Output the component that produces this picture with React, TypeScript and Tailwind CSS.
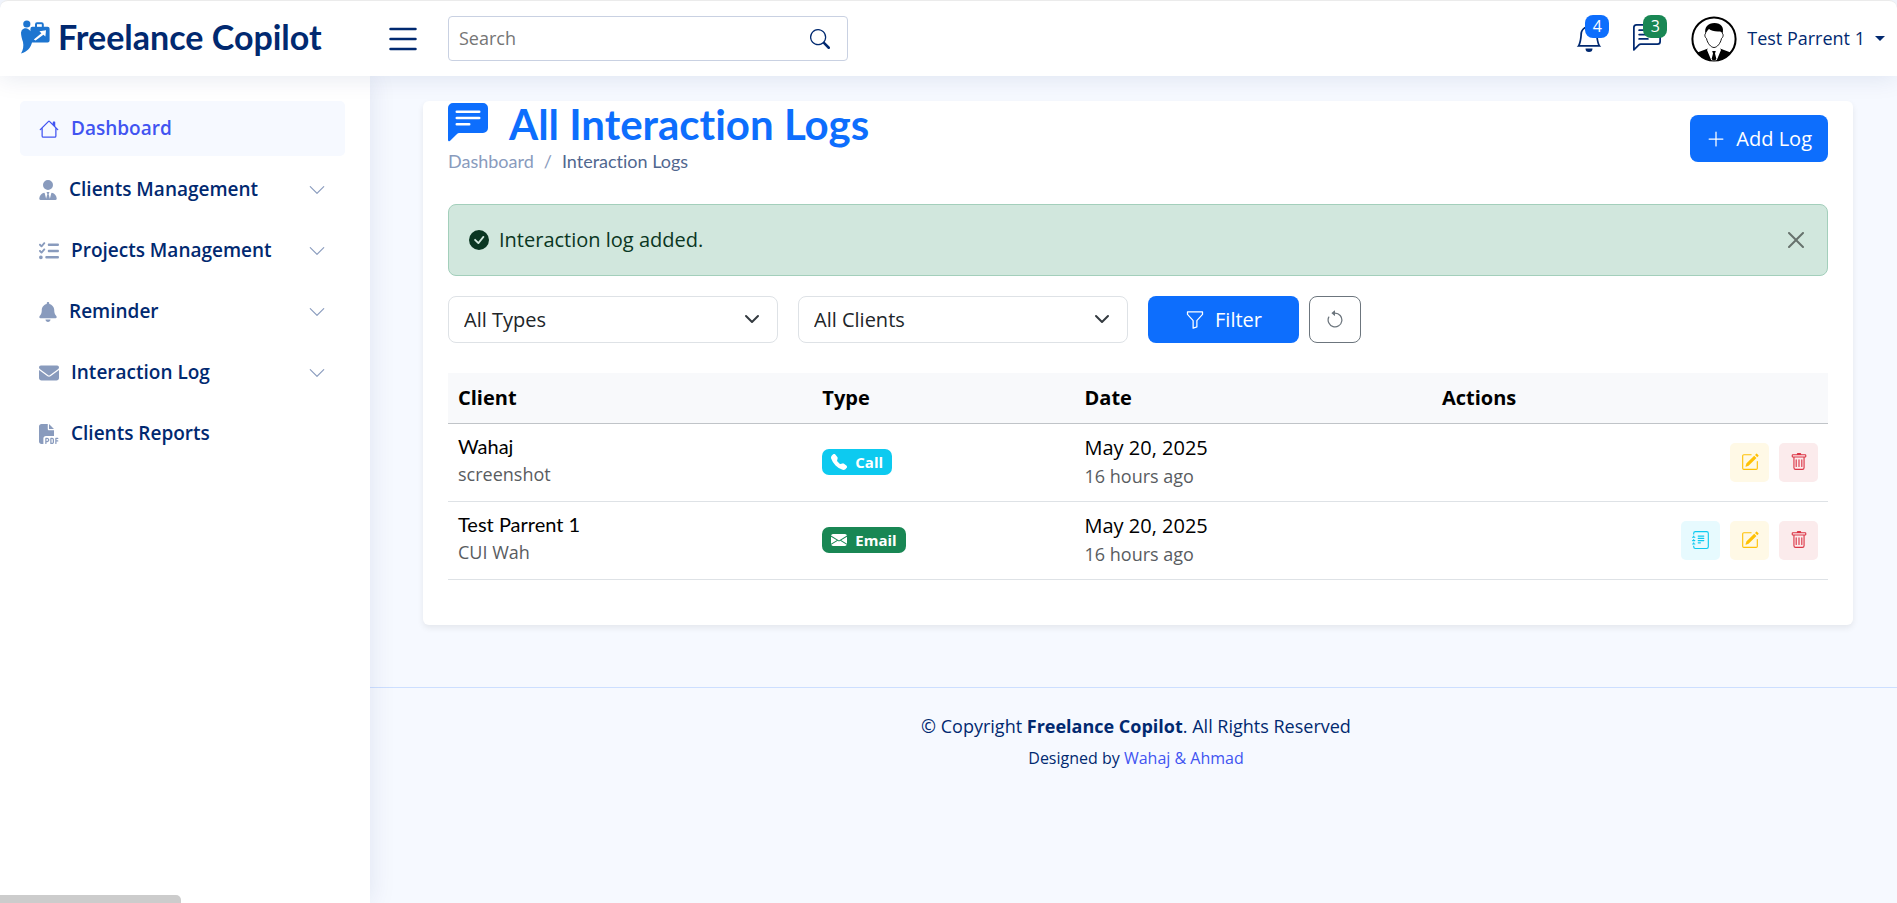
import React from "react";
import {
  BsArrowCounterclockwise,
  BsBell,
  BsChatLeftText,
  BsChatLeftTextFill,
  BsCheckCircleFill,
  BsChevronDown,
  BsEnvelopeFill,
  BsFunnel,
  BsHouse,
  BsJournalText,
  BsList,
  BsPencilSquare,
  BsPlusLg,
  BsSearch,
  BsTelephoneFill,
  BsTrash,
} from "react-icons/bs";
import { FaBell, FaEnvelope, FaFilePdf, FaListCheck, FaUserTie } from "react-icons/fa6";

const HEADING = "font-['Lato',sans-serif] [font-variant-ligatures:none]";

function Logo() {
  return (
    <svg viewBox="0 0 30 34" className="h-[34px] w-[30px] shrink-0" fill="#1d75d0" aria-hidden="true">
      <circle cx="6.8" cy="4" r="3.6" />
      <path d="M4 8.6 C7 7.6 9 9.4 10.4 11.2 L10.4 9 Q10.4 6.8 12.4 6.8 L15 6.8 L15 4.4 Q15 2.2 17 2.2 L21.600 2.2 Q23.800 2.200 23.800 4.400 L23.800 6.800 L27.600 6.800 Q29.600 6.800 29.600 8.800 L29.600 20.600 Q29.600 22.600 27.600 22.600 L12 22.600 C10.800 27.600 7.600 32 1 33.400 C3.200 30 3.800 26 3 22 C1.800 18.400 1 15.400 1 12.400 Q1.200 9.600 4 8.600 Z" />
      <path d="M17 4.200 H21.800 V6.800 H17 Z" fill="#fff" />
      <path d="M13.800 19.600 L21.400 13.200 L19.400 11.200 L26 10.200 L25.400 16.600 L23.400 14.800 L15.600 20.600 Z" fill="#fff" />
    </svg>
  );
}

function Avatar() {
  return (
    <svg viewBox="0 0 46 46" className="size-[46px] shrink-0" role="img" aria-label="Profile">
      <defs>
        <clipPath id="avatar-clip">
          <circle cx="23" cy="23" r="21.500" />
        </clipPath>
      </defs>
      <circle cx="23" cy="23" r="21.600" fill="#fff" stroke="#000" strokeWidth="2" />
      <g clipPath="url(#avatar-clip)">
        <path d="M5 37 L17 32.500 L23 46 L29 32.500 L41 37 V46 H5 Z" />
        <path d="M17.500 31 L23 35 L28.500 31 L30 34 L25 46 H21 L16 34 Z" fill="#fff" />
        <path d="M21.200 35 H24.800 L24 37.600 L25.400 43 L23 45.500 L20.600 43 L22 37.600 Z" />
      </g>
      <path
        d="M15 17 C13 18.500 14 21.500 15.500 22.500 C16.500 27.500 20 31.500 23 31.500 C26 31.500 29.500 27.500 30.500 22.500 C32 21.500 33 18.500 31 17"
        fill="#fff"
        stroke="#000"
        strokeWidth="0.9"
      />
      <path d="M14.500 18 C13 11 17 7 23.500 7 C30 7 33.500 11 31.500 18 C31 16.500 30 15.500 29 15.500 C24 16 20 14.500 18 13 C16.500 14 15.500 16 14.500 18 Z" />
    </svg>
  );
}

const navItems = [
  { label: "Clients Management", icon: <FaUserTie className="h-5 w-[18px]" />, open: true },
  { label: "Projects Management", icon: <FaListCheck className="size-5" />, open: true },
  { label: "Reminder", icon: <FaBell className="h-5 w-[18px]" />, open: true },
  { label: "Interaction Log", icon: <FaEnvelope className="size-5" />, open: true },
  { label: "Clients Reports", icon: <FaFilePdf className="size-5" />, open: false },
];

function Header() {
  return (
    <header className="relative z-20 flex h-[76px] shrink-0 items-center rounded-t-lg border-t border-[#ebebeb] bg-white pl-5 pr-3 shadow-[0_2px_25px_rgba(1,41,112,0.1)]">
      <a href="#" className="flex w-[363px] items-center gap-2 pb-1">
        <Logo />
        <span className={`${HEADING} text-[34px] leading-10 font-bold whitespace-nowrap text-[#012970]`}>
          Freelance Copilot
        </span>
      </a>
      <button type="button" aria-label="Toggle sidebar" className="text-[#012970]">
        <BsList className="size-10" />
      </button>
      <form className="ml-[25px] flex h-[45px] w-[400px] items-center rounded-[4px] border border-[#c9d1e2] pr-[17px] pl-[10px]">
        <input
          type="search"
          aria-label="Search"
          placeholder="Search"
          className="min-w-0 flex-1 text-[18px] text-[#012970] outline-none placeholder:text-[#757575]"
        />
        <button type="button" aria-label="Submit search" className="text-[#012970]">
          <BsSearch className="size-5" />
        </button>
      </form>
      <nav className="ml-auto flex items-center text-[#012970]">
        <button type="button" aria-label="Notifications" className="relative mr-[30px] mb-[2px]">
          <BsBell className="size-7" />
          <span className="absolute -top-[9px] left-[10px] flex h-[23px] w-6 items-center justify-center rounded-lg bg-[#0d6efd] text-[16px] leading-none text-white">
            4
          </span>
        </button>
        <button type="button" aria-label="Messages" className="relative mr-[30px] mb-[2px]">
          <BsChatLeftText className="size-7" />
          <span className="absolute -top-[9px] left-[10px] flex h-[23px] w-6 items-center justify-center rounded-lg bg-[#198754] text-[16px] leading-none text-white">
            3
          </span>
        </button>
        <button type="button" className="flex items-center">
          <Avatar />
          <span className="ml-[10px] text-[18px] font-medium whitespace-nowrap">Test Parrent 1</span>
          <svg viewBox="0 0 10 5" className="ml-[10px] h-[5px] w-[10px]" fill="currentColor" aria-hidden="true">
            <path d="M0 0 H10 L5 5 Z" />
          </svg>
        </button>
      </nav>
    </header>
  );
}

function Sidebar() {
  return (
    <aside className="z-10 w-[370px] shrink-0 bg-white py-[25px] pr-[25px] pl-5 shadow-[0_0_25px_rgba(1,41,112,0.1)]">
      <ul className="flex flex-col gap-[6px] text-[19px] font-semibold">
        <li>
          <a href="#" className="flex h-[55px] items-center gap-3 rounded-[5px] bg-[#f6f9ff] px-[19px] text-[#4154f1]">
            <BsHouse className="size-5" />
            Dashboard
          </a>
        </li>
        {navItems.map((item) => (
          <li key={item.label}>
            <a href="#" className="flex h-[55px] items-center gap-3 px-[19px] text-[#012970]">
              <span className="text-[#899bbd]">{item.icon}</span>
              {item.label}
              {item.open && <BsChevronDown className="ml-auto size-[18px] text-[#899bbd]" />}
            </a>
          </li>
        ))}
      </ul>
    </aside>
  );
}

function Select({ label, option }: { label: string; option: string }) {
  return (
    <div className="relative">
      <select
        aria-label={label}
        className="h-[47px] w-full appearance-none rounded-lg border border-[#dee2e6] bg-white px-[15px] text-[20px] text-[#212529]"
      >
        <option>{option}</option>
      </select>
      <svg
        viewBox="0 0 16 16"
        className="pointer-events-none absolute top-[15px] right-[18px] size-4"
        fill="none"
        stroke="#343a40"
        strokeWidth="2"
        strokeLinecap="round"
        strokeLinejoin="round"
        aria-hidden="true"
      >
        <path d="m2 5 6 6 6-6" />
      </svg>
    </div>
  );
}

const logs = [
  { name: "Wahaj", company: "screenshot", type: "Call", notes: false },
  { name: "Test Parrent 1", company: "CUI Wah", type: "Email", notes: true },
];

function LogTable() {
  return (
    <table className="mt-[30px] w-full table-fixed border-collapse text-left text-[20px] text-black">
      <colgroup>
        <col className="w-[26.4%]" />
        <col className="w-[19%]" />
        <col className="w-[25.9%]" />
        <col />
      </colgroup>
      <thead className="border-b border-[#c0c4c8] bg-[#f8f9fb]">
        <tr className="h-[50px]">
          <th className="px-[10px] font-bold">Client</th>
          <th className="px-[10px] font-bold">Type</th>
          <th className="px-[10px] font-bold">Date</th>
          <th className="px-[10px] font-bold">Actions</th>
        </tr>
      </thead>
      <tbody>
        {logs.map((log) => (
          <tr key={log.name} className="h-[78px] border-b border-[#dee2e6]">
            <td className="px-[10px]">
              <div className={`${HEADING} leading-6`}>{log.name}</div>
              <div className="text-[18px] leading-8 text-[#595c5f]">{log.company}</div>
            </td>
            <td className="px-[10px]">
              {log.type === "Call" ? (
                <span className="flex h-[26px] w-fit items-center gap-2 rounded-[7px] bg-[#0dcaf0] px-[9px] text-[15px] font-bold text-white">
                  <BsTelephoneFill className="size-4" />
                  Call
                </span>
              ) : (
                <span className="flex h-[26px] w-fit items-center gap-2 rounded-[7px] bg-[#198754] px-[9px] text-[15px] font-bold text-white">
                  <BsEnvelopeFill className="size-4" />
                  Email
                </span>
              )}
            </td>
            <td className="px-[10px]">
              <div className="leading-7">May 20, 2025</div>
              <div className="text-[18px] leading-7 text-[#595c5f]">16 hours ago</div>
            </td>
            <td className="px-[10px]">
              <div className="flex justify-end gap-[10px]">
                {log.notes && (
                  <button type="button" aria-label="View notes" className="flex size-[39px] items-center justify-center rounded-[5px] bg-[#e7fafe] text-[#0dcaf0]">
                    <BsJournalText className="size-[18px]" />
                  </button>
                )}
                <button type="button" aria-label="Edit" className="flex size-[39px] items-center justify-center rounded-[5px] bg-[#fff9e6] text-[#ffc107]">
                  <BsPencilSquare className="size-[18px]" />
                </button>
                <button type="button" aria-label="Delete" className="flex size-[39px] items-center justify-center rounded-[5px] bg-[#fbebec] text-[#dc3545]">
                  <BsTrash className="size-[18px]" />
                </button>
              </div>
            </td>
          </tr>
        ))}
      </tbody>
    </table>
  );
}

export default function App() {
  return (
    <div className="flex min-h-screen flex-col bg-[#f6f9ff] font-['Open_Sans',sans-serif] text-[#444444]">
      <Header />
      <div className="flex flex-1">
        <Sidebar />
        <div className="flex min-w-0 flex-1 flex-col">
          <main className="pt-[25px] pr-11 pb-[62px] pl-[53px]">
            <section className="rounded-md bg-white px-[25px] pb-[45px] shadow-[0_3px_6px_rgba(0,0,0,0.075)]">
              <div className="flex items-start justify-between">
                <div>
                  <h1 className={`${HEADING} flex items-center gap-[21px] text-[42px] leading-[47px] font-bold text-[#0d6efd]`}>
                    <BsChatLeftTextFill className="mb-1 size-10" />
                    All Interaction Logs
                  </h1>
                  <nav aria-label="Breadcrumb" className={`${HEADING} flex gap-[10px] text-[18px] leading-[26px] text-[#899bbd]`}>
                    <a href="#">Dashboard</a>
                    <span>/</span>
                    <span className="text-[#51678f]">Interaction Logs</span>
                  </nav>
                </div>
                <button type="button" className="mt-[14px] flex h-[47px] items-center gap-[10px] rounded-lg bg-[#0d6efd] px-4 text-[20px] text-white">
                  <BsPlusLg className="size-5" />
                  Add Log
                </button>
              </div>
              <div role="alert" className="mt-[30px] flex h-[72px] items-center gap-[10px] rounded-lg border border-[#a3cfbb] bg-[#d1e7dd] pr-[23px] pl-5 text-[20px] text-[#0a3622]">
                <BsCheckCircleFill className="size-5" />
                Interaction log added.
                <button type="button" aria-label="Close" className="ml-auto text-black opacity-50">
                  <svg viewBox="0 0 16 16" className="size-4" fill="currentColor" aria-hidden="true">
                    <path d="M.293.293a1 1 0 0 1 1.414 0L8 6.586 14.293.293a1 1 0 1 1 1.414 1.414L9.414 8l6.293 6.293a1 1 0 0 1-1.414 1.414L8 9.414l-6.293 6.293a1 1 0 0 1-1.414-1.414L6.586 8 .293 1.707a1 1 0 0 1 0-1.414z" />
                  </svg>
                </button>
              </div>
              <form className="mt-5 grid grid-cols-4 gap-5">
                <Select label="Type" option="All Types" />
                <Select label="Client" option="All Clients" />
                <div className="flex gap-[10px]">
                  <button type="button" className="flex h-[47px] w-[151px] items-center justify-center gap-[10px] rounded-lg bg-[#0d6efd] text-[20px] text-white">
                    <BsFunnel className="size-5" />
                    Filter
                  </button>
                  <button type="button" aria-label="Reset filters" className="flex h-[47px] w-[52px] items-center justify-center rounded-lg border border-[#6c757d] text-[#6c757d]">
                    <BsArrowCounterclockwise className="size-5" />
                  </button>
                </div>
              </form>
              <LogTable />
            </section>
          </main>
          <footer className="border-t border-[#cddfff] py-[25px] pl-[5px] text-center text-[#012970]">
            <p className="text-[18px] leading-[27px]">
              © Copyright <strong className="font-bold">Freelance Copilot</strong>. All Rights Reserved
            </p>
            <p className="pt-[6px] text-[16px] leading-6">
              Designed by{" "}
              <a href="#" className="text-[#4154f1]">
                Wahaj &amp; Ahmad
              </a>
            </p>
          </footer>
        </div>
      </div>
      <div className="fixed bottom-0 left-0 z-30 h-2 w-[181px] rounded-tr-[5px] bg-[#cccccc]" />
    </div>
  );
}
